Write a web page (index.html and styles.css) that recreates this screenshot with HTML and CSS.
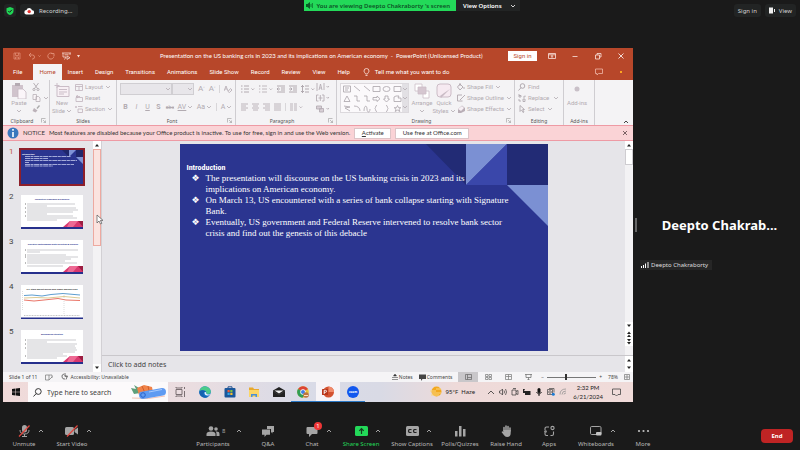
FILE: index.html
```html
<!DOCTYPE html>
<html lang="en">
<head>
<meta charset="utf-8">
<title>Meeting - shared screen</title>
<link rel="stylesheet" href="styles.css">
</head>
<body>
<svg class="defs" aria-hidden="true">
  <symbol id="chev" viewBox="0 0 6 4"><path d="M1 1l2 2 2-2" fill="none" stroke="currentColor" stroke-width=".8"/></symbol>
  <symbol id="up" viewBox="0 0 6 4"><path d="M1 3l2-2 2 2" fill="none" stroke="currentColor"/></symbol>
  <symbol id="tri-up" viewBox="0 0 8 8"><path d="M2 5.500L4 3l2 2.500z" fill="#222"/></symbol>
  <symbol id="tri-down" viewBox="0 0 8 8"><path d="M2 2.500L4 5l2-2.500z" fill="#222"/></symbol>
  <symbol id="launch" viewBox="0 0 5 5"><path d="M.5 4.500v-4h4M2 2l2.500 2.500M4.500 2.500v2h-2" fill="none" stroke="#999" stroke-width=".6"/></symbol>
  <symbol id="deck" viewBox="0 0 62 34">
    <rect width="62" height="34" fill="#fff"/>
    <path d="M42 32l7-6h13v6z" fill="#d9386f"/><path d="M49 26h8l-5 6h-6z" fill="#ee6a94"/><path d="M57 26h5v6z" fill="#9c1e42"/>
    <rect y="32" width="62" height="2" fill="#26308c"/>
  </symbol>
</svg>

<header class="meeting-bar">
  <div class="bar-left">
    <button class="chip shield" aria-label="Security"><svg width="8" height="8" viewBox="0 0 8 8"><path d="M4 0l3.500 1.200V4C7.500 6 6 7.400 4 8 2 7.400.5 6 .5 4V1.200z" fill="#1fd655"/><path d="M2.300 4l1.300 1.300 2.300-2.500" fill="none" stroke="#1a1a1a"/></svg></button>
    <div class="chip"><svg width="10" height="8" viewBox="0 0 10 8"><path d="M2.500 7.500a2.200 2.200 0 010-4.400A2.800 2.800 0 018 3.300a2.100 2.100 0 010 4.200z" fill="#fff"/><circle cx="5.200" cy="4.600" r="1.700" fill="#e8302c"/></svg><span class="rec">Recording...</span></div>
  </div>
  <div class="banner">
    <div class="viewing"><svg width="7" height="7" viewBox="0 0 7 7"><path d="M0 2h1.500L4 0v7L1.500 5H0z" fill="#0a5a26"/><path d="M5 2v3M6.400 1v5" stroke="#0a5a26" stroke-width=".7"/></svg>You are viewing Deepto Chakraborty 's screen</div>
    <button class="view-options">View Options <svg width="6" height="4"><use href="#chev"/></svg></button>
  </div>
  <div class="bar-right">
    <button class="chip">Sign in</button>
    <button class="chip"><svg width="7" height="7" viewBox="0 0 7 7"><rect y=".5" width="4" height="6" fill="#eee"/><path d="M5 2h1v3H5z" fill="#eee"/></svg>View</button>
  </div>
</header>

<main class="stage">
  <section class="desktop">
    <div class="titlebar">
      <div class="quick">
        <svg width="8" height="8" viewBox="0 0 8 8" fill="none" stroke="#df8b72"><path d="M1 1h6v6H1zM2.500 1v2.500h3V1M2.500 7V5h3v2" stroke-width=".8"/></svg>
        <svg width="14" height="8" viewBox="0 0 14 8" fill="none" stroke="#df8b72"><path d="M3 1L1 3l2 2M1 3h3.500a2 2 0 010 4H4M10.500 3.500l1 1 1-1"/></svg>
        <svg width="8" height="8" viewBox="0 0 8 8" fill="none" stroke="#df8b72"><path d="M6 2a3 3 0 10.800 2.500M4 1.500h3V4"/></svg>
        <svg width="9" height="8" viewBox="0 0 9 8" fill="none" stroke="#f6dcd4" stroke-width=".8"><path d="M0 1h9M1 1v4h3M8 1v2M2.500 2.800h4M4 5l-1.500 2.500M5 4l3 1.700-3 1.700z"/></svg>
        <svg width="5" height="5" viewBox="0 0 5 5"><path d="M1 1h3L2.500 3.500z" fill="#f6dcd4"/></svg>
      </div>
      <h1 class="doc-title">Presentation on the US banking cris in 2023 and its implications on American economy &nbsp;- &nbsp;PowerPoint (Unlicensed Product)</h1>
      <div class="win">
        <button class="signin">Sign in</button>
        <button aria-label="Ribbon options"><svg width="8" height="8" viewBox="0 0 8 8" fill="none" stroke="#fbe6df" stroke-width=".8"><path d="M.5 1.500h7v5h-7zM.5 2.800h7M4 6V3.600M2.800 4.600L4 3.600l1.200 1"/></svg></button>
        <button aria-label="Minimize"><svg width="8" height="8" viewBox="0 0 8 8"><path d="M1.500 4.500h5" stroke="#fbe6df" stroke-width=".8"/></svg></button>
        <button aria-label="Restore"><svg width="8" height="8" viewBox="0 0 8 8" fill="none" stroke="#fbe6df" stroke-width=".8"><path d="M1.500 3h4v4h-4zM3 3V1.500h4V5H5.500"/></svg></button>
        <button aria-label="Close"><svg width="8" height="8" viewBox="0 0 8 8"><path d="M1.500 1.500l5 5M6.500 1.500l-5 5" stroke="#fff" stroke-width=".8"/></svg></button>
      </div>
    </div>

    <nav class="tabs">
      <a class="file" href="#">File</a><a class="active" href="#">Home</a><a href="#">Insert</a><a href="#">Design</a><a href="#">Transitions</a><a href="#">Animations</a><a href="#">Slide Show</a><a href="#">Record</a><a href="#">Review</a><a href="#">View</a><a href="#">Help</a>
      <a class="tell" href="#"><svg width="7" height="9" viewBox="0 0 7 9" fill="none" stroke="#fbe6df" stroke-width=".8"><path d="M2.500 6C2.500 5 1 4.500 1 3a2.500 2.500 0 015 0c0 1.500-1.500 2-1.500 3zM2.500 7.500h2"/></svg>Tell me what you want to do</a>
      <span class="tab-end"><svg width="8" height="8" viewBox="0 0 8 8"><path d="M.5 1h7v4.500H3.500L2 7V5.500H.5z" fill="none" stroke="#f0b8a8" stroke-width=".8"/></svg><i class="dot"></i></span>
    </nav>

    <div class="ribbon">
      <section class="group clipboard">
        <div class="tools">
          <button class="big"><svg width="16" height="16" viewBox="0 0 16 16"><path d="M1 2h11v12H1z" fill="#d0c3cc"/><path d="M4 0h5v3H4z" fill="#b5aab2"/><path d="M7 6h5l3 3v7H7z" fill="#fbf5f9" stroke="#c5b8c1" stroke-width=".8"/></svg>Paste<svg width="6" height="4"><use href="#chev"/></svg></button>
          <div class="stack">
            <button aria-label="Cut"><svg width="9" height="8" viewBox="0 0 9 8" fill="none" stroke="#b0a9af" stroke-width=".9"><path d="M1.500 0l4 5.500M6.500 0l-4 5.500"/><circle cx="2" cy="6.500" r="1.100"/><circle cx="6" cy="6.500" r="1.100"/></svg></button>
            <button aria-label="Copy"><svg width="9" height="8" viewBox="0 0 9 8" fill="#f8f3f6" stroke="#b9b1b8" stroke-width=".8"><path d="M1 .5h3.500v5H1zM4 2.500h2.500L8 4v3.500H4z"/></svg><svg width="6" height="4"><use href="#chev"/></svg></button>
            <button aria-label="Format Painter"><svg width="9" height="8" viewBox="0 0 9 8"><path d="M7.500.5L5 3.500" stroke="#aaa" stroke-width="1.300"/><path d="M2 3l3.500 2.500L3.500 7.500.5 6z" fill="#bcb2b9"/></svg></button>
          </div>
        </div>
        <h2 class="launches">Clipboard<svg width="5" height="5"><use href="#launch"/></svg></h2>
      </section>

      <section class="group slides">
        <div class="tools">
          <button class="big"><svg width="16" height="16" viewBox="0 0 16 16" fill="none" stroke="#cabdc7"><path d="M3 3.500h12v10H3z" fill="#f8f0f5"/><path d="M5 6.500h8M5 9h8M5 11h5M3 0v5M.5 2.500h5"/></svg>New<span class="with-chev">Slide<svg width="6" height="4"><use href="#chev"/></svg></span></button>
          <div class="stack">
            <button><svg width="8" height="7" viewBox="0 0 8 7" fill="none" stroke="#c0b3bc" stroke-width=".8"><path d="M.5.500h7v6h-7zM.5 2.500h7M4 2.500v4"/></svg>Layout<svg width="6" height="4"><use href="#chev"/></svg></button>
            <button><svg width="8" height="7" viewBox="0 0 8 7" fill="none" stroke="#c0b3bc" stroke-width=".8"><path d="M1 2.500h6.500v4H1zM3 0L1 1.500 3 3M1 1.500h4"/></svg>Reset</button>
            <button><svg width="8" height="7" viewBox="0 0 8 7" fill="none" stroke="#c0b3bc" stroke-width=".8"><path d="M3 .5h4.500M3 3h4.500v3.500H3zM1 0v2M0 1h2"/></svg>Section<svg width="6" height="4"><use href="#chev"/></svg></button>
          </div>
        </div>
        <h2>Slides</h2>
      </section>

      <section class="group font">
        <div class="rows">
          <div class="row">
            <span class="combo face"><select aria-label="Font" disabled><option></option></select><svg width="6" height="4"><use href="#chev"/></svg></span><span class="combo size"><select aria-label="Font size" disabled><option></option></select><svg width="6" height="4"><use href="#chev"/></svg></span>
            <button class="grow">A<sup>˄</sup></button><button class="grow">A<sup>˅</sup></button>
            <button class="sep" aria-label="Clear formatting"><svg width="8" height="8" viewBox="0 0 8 8" fill="none" stroke="#b3a8b0"><path d="M0 6l2-5 2 5M1 4h2M4 6.500l2.500-3L8 5 5.500 7.500z" stroke-width=".8"/></svg></button>
          </div>
          <div class="row letters">
            <button><b>B</b></button><button><em>I</em></button><button><u>U</u></button><button><b>S</b></button><button><s class="abc">abc</s></button><button><u>AV</u><svg width="6" height="4"><use href="#chev"/></svg></button><button>Aa<svg width="6" height="4"><use href="#chev"/></svg></button><button class="sep">A<svg width="6" height="4"><use href="#chev"/></svg></button>
          </div>
        </div>
        <h2 class="launches">Font<svg width="5" height="5"><use href="#launch"/></svg></h2>
      </section>

      <section class="group para">
        <div class="tools">
        <div class="rows">
          <div class="row">
            <button aria-label="Bullets"><svg width="14" height="8" viewBox="0 0 14 8" stroke="#aaa3a9" fill="none" stroke-width=".9"><path d="M0 1h1.500M0 4h1.500M0 7h1.500M3 1h5M3 4h5M3 7h5M10.500 3.500l1.300 1.300 1.300-1.300"/></svg></button>
            <button aria-label="Numbering"><svg width="14" height="8" viewBox="0 0 14 8" stroke="#b9b2b8" fill="none" stroke-width=".9"><path d="M.8 0v2M0 4h1.300M0 7h1.300M3 1h5M3 4h5M3 7h5M10.500 3.500l1.300 1.300 1.300-1.300"/></svg></button>
            <button aria-label="Decrease indent"><svg width="8" height="8" viewBox="0 0 8 8" stroke="#aaa3a9" fill="none" stroke-width=".9"><path d="M0 1h8M4 3h4M4 5h4M0 7h8M3 4H0M1.500 2.500L0 4l1.500 1.500"/></svg></button>
            <button aria-label="Increase indent"><svg width="8" height="8" viewBox="0 0 8 8" stroke="#aaa3a9" fill="none" stroke-width=".9"><path d="M0 1h8M4 3h4M4 5h4M0 7h8M0 4h3M1.500 2.500L3 4 1.500 5.500"/></svg></button>
            <button aria-label="Line spacing"><svg width="14" height="8" viewBox="0 0 14 8" stroke="#aaa3a9" fill="none" stroke-width=".9"><path d="M1.500 0v8M0 2l1.500-1.500L3 2M0 6l1.500 1.500L3 6M4 1h4M4 4h4M4 7h4M10.500 3.500l1.300 1.300 1.300-1.300"/></svg></button>
          </div>
          <div class="row aligns">
            <button aria-label="Align left"><svg width="7" height="8" viewBox="0 0 7 8" stroke="#b5aeb4" stroke-width=".9"><path d="M0 1h7M0 3h5M0 5h7M0 7h5"/></svg></button>
            <button aria-label="Center"><svg width="7" height="8" viewBox="0 0 7 8" stroke="#b5aeb4" stroke-width=".9"><path d="M0 1h7M1 3h5M0 5h7M1 7h5"/></svg></button>
            <button aria-label="Align right"><svg width="7" height="8" viewBox="0 0 7 8" stroke="#b5aeb4" stroke-width=".9"><path d="M0 1h7M2 3h5M0 5h7M2 7h5"/></svg></button>
            <button aria-label="Justify"><svg width="7" height="8" viewBox="0 0 7 8" stroke="#b5aeb4" stroke-width=".9"><path d="M0 1h7M0 3h7M0 5h7M0 7h7"/></svg></button>
            <button class="sep" aria-label="Columns"><svg width="14" height="8" viewBox="0 0 14 8" stroke="#b5aeb4" fill="none" stroke-width=".9"><path d="M0 1h3M0 3h3M0 5h3M0 7h3M4 1h3M4 3h3M4 5h3M4 7h3M9.500 3.500l1.300 1.300 1.300-1.300"/></svg></button>
          </div>
        </div>
        <div class="stack">
          <button aria-label="Text direction"><svg width="14" height="8" viewBox="0 0 14 8" stroke="#b5aeb4" fill="none" stroke-width=".9"><path d="M1 0v8M3 7l1.500-6L6 7M3.500 5h2M8 0v7M10.500 3l1.300 1.300L13 3"/></svg></button>
          <button aria-label="Align text"><svg width="14" height="8" viewBox="0 0 14 8" stroke="#b5aeb4" fill="none" stroke-width=".9"><path d="M2.500 1H.5v6h2M6 1h2v6H6M4.300 1v6M2.500 4h4M10.500 3l1.300 1.300L13 3"/></svg></button>
          <button aria-label="SmartArt"><svg width="14" height="8" viewBox="0 0 14 8" stroke="#b5aeb4" fill="#d8cfd6" stroke-width=".9"><path d="M.5 1h5v3h-5zM3.500 3.500h4v3.500h-4z"/><path d="M10.500 3l1.300 1.300L13 3" fill="none"/></svg></button>
        </div>
        </div>
        <h2 class="launches">Paragraph<svg width="5" height="5"><use href="#launch"/></svg></h2>
      </section>

      <section class="group drawing">
        <div class="tools">
          <div class="gallery">
            <svg width="61" height="29" viewBox="0 0 61 29" fill="none" stroke="#aaa3aa" stroke-width=".8">
              <path d="M2.500 2h7v6h-7zM4 4h4M4 6h3M13 2l6 5M23 2l6 5M32 2.500h7v5h-7zM53 2.500h7v5h-7z"/><ellipse cx="45.500" cy="5" rx="3.500" ry="2.500"/>
              <path d="M3 17.500L6 12l3 5.500zM13 12h3v5h3M23 12h3v5h3M32 13.500h4V12l3 2.800-3 2.700V16h-4zM44 12h3v3h1.500l-3 3-3-3H44zM53 17.500V13l2-1h3l-1 2h3v3.500z"/>
              <path d="M3 22l6 1-5 1 5 3M13 22c4 0 6 2 6 5M23 27c0-6 3-6 3-2s3 4 3 0M36 21.500c-2 0-1 2-2 3 1 1 0 3 2 3M45 21.500c2 0 1 2 2 3-1 1 0 3-2 3M56.500 21.500l1 2.200h2.300L58 25.200l.8 2.300-2.300-1.400-2.300 1.400.8-2.300-1.800-1.500h2.300z"/>
            </svg>
            <div class="gallery-scroll"><svg width="6" height="4"><use href="#chev"/></svg><svg width="6" height="4"><use href="#chev"/></svg><svg width="6" height="4"><use href="#chev"/></svg></div>
          </div>
          <button class="big"><svg width="16" height="16" viewBox="0 0 16 16" stroke="#cbbcc6" stroke-width=".8"><path d="M1 1h7v7H1z" fill="#fff"/><path d="M9 8h6v7H9z" fill="#fff"/><path d="M4 4h8v7H4z" fill="#d5c6d0"/></svg>Arrange<svg width="6" height="4"><use href="#chev"/></svg></button>
          <button class="big"><svg width="16" height="16" viewBox="0 0 16 16"><rect x="1" y="1" width="14" height="13" rx="3" fill="#f6eaf1" stroke="#cbbcc6"/><path d="M14 6L8 12l-3 3-1-2 4-3z" fill="#c9bbc5"/></svg>Quick<span class="with-chev">Styles<svg width="6" height="4"><use href="#chev"/></svg></span></button>
          <div class="stack">
            <button><svg width="8" height="8" viewBox="0 0 8 8" fill="none" stroke="#b0a7ae" stroke-width=".9"><path d="M3 1l3 3-3 3-2.500-3zM3 0v3M7 4v2"/></svg>Shape Fill<svg width="6" height="4"><use href="#chev"/></svg></button>
            <button><svg width="8" height="8" viewBox="0 0 8 8" fill="none" stroke="#b0a7ae" stroke-width=".9"><path d="M5 1H.5v6h5M8 1L3 6"/></svg>Shape Outline<svg width="6" height="4"><use href="#chev"/></svg></button>
            <button><svg width="8" height="8" viewBox="0 0 8 8"><path d="M1 4l4-3.500L8 3v3L4 8H1z" fill="#b9aeb6"/><path d="M1 4l4-3 2 2-3 3z" fill="#f7f0f5"/></svg>Shape Effects<svg width="6" height="4"><use href="#chev"/></svg></button>
          </div>
        </div>
        <h2 class="launches">Drawing<svg width="5" height="5"><use href="#launch"/></svg></h2>
      </section>

      <section class="group editing">
        <div class="tools"><div class="stack">
          <button><svg width="8" height="8" viewBox="0 0 8 8" fill="none" stroke="#a9a2a8" stroke-width=".9"><circle cx="4.500" cy="3" r="2.300"/><path d="M3 4.700L.5 7.500"/></svg>Find</button>
          <button><svg width="8" height="8" viewBox="0 0 8 8" fill="none" stroke="#a9a2a8" stroke-width=".8"><path d="M1 0v3h2V1.500H1M5 5v2.500h2V5zM1 5v2h2M5 3h2V1.500"/></svg>Replace<svg width="10" height="4"><use href="#chev"/></svg></button>
          <button><svg width="8" height="8" viewBox="0 0 8 8" fill="none" stroke="#a9a2a8" stroke-width=".8"><path d="M2 .5v6l1.600-1.600L5 7.500l1-.5-1.300-2.500H6.500z"/></svg>Select<svg width="6" height="4"><use href="#chev"/></svg></button>
        </div></div>
        <h2>Editing</h2>
      </section>

      <section class="group addins">
        <div class="tools"><button class="big"><svg width="16" height="16" viewBox="0 0 16 16"><circle cx="8" cy="6" r="2.500" fill="#c9c0c8"/></svg>Add-ins</button></div>
        <h2>Add-ins</h2>
      </section>
      <button class="collapse" aria-label="Collapse ribbon"><svg width="6" height="4"><use href="#up"/></svg></button>
    </div>

    <div class="notice">
      <svg width="12" height="12" viewBox="0 0 12 12"><circle cx="6" cy="6" r="5.500" fill="#3a78bd"/><path d="M6 2v1.800M6 5v5" stroke="#fff" stroke-width="1.600"/></svg>
      <span class="notice-tag">NOTICE</span><span class="notice-text">Most features are disabled because your Office product is inactive. To use for free, sign in and use the Web version.</span>
      <button><u>A</u>ctivate</button><button class="wide">Use free at Office.com</button>
      <button class="x" aria-label="Dismiss"><svg width="6" height="6" viewBox="0 0 6 6"><path d="M1 1l4 4M5 1L1 5" stroke="#5c4548" stroke-width=".8"/></svg></button>
    </div>

    <div class="work">
      <ol class="thumbs">
        <li class="current"><span>1</span><svg viewBox="0 0 62 34"><rect width="62" height="34" fill="#2b3590"/><path d="M41 0h7v7zM55 0h7v7h-7z" fill="#1f276c"/><path d="M48 0h7l-7 7zM55 7h7v7z" fill="#7f93d6"/><g class="mini light"><text x="1" y="5">Introduction</text></g><path d="M4 6.500h46M4 8.500h23M4 10.500h52M4 12.500h4M4 14.500h49M4 16h28" stroke="#c3c9ec" stroke-width=".8" stroke-dasharray="5 .5 3 .6"/></svg></li>
        <li><span>2</span><svg viewBox="0 0 62 34"><use href="#deck"/><g class="mini"><text x="31" y="5" text-anchor="middle">Theoretical framework &amp; Research</text></g><path d="M6 9h48M6 11h20M6 13h49M6 15h51M6 17h46M6 19h20M6 21h46M6 23h50M6 25h30" stroke="#b4b4ba" stroke-width=".7"/><path d="M4 9h1M4 13h1M4 17h1M4 21h1" stroke="#777"/></svg></li>
        <li><span>3</span><svg viewBox="0 0 62 34"><use href="#deck"/><g class="mini"><text x="32" y="5" text-anchor="middle">Narrative Methodology/Data collection &amp; research</text></g><path d="M6 10h51M6 12h13M6 15h39M6 17h51M6 19h44M6 21h38M6 23h50M6 26h36" stroke="#b4b4ba" stroke-width=".7"/><path d="M4 10h1M4 15h1M4 17h1M4 23h1" stroke="#777"/></svg></li>
        <li><span>4</span><svg viewBox="0 0 62 34"><rect width="62" height="34" fill="#fff"/><g class="mini black"><text x="31" y="5" text-anchor="middle">U.S. Stock Market During 2023 global banking crisis</text></g><path d="M3 10.500l8-.5 10 1 9-1.500 12-1 17 1.500" fill="none" stroke="#5d9ed0"/><path d="M3 13l12-.5 12 .5 16-1.500 16 1.500" fill="none" stroke="#d2bd79" stroke-width=".8"/><path d="M3 15l10 1 10-1 14-1.500 8 1.500 14 .5" fill="none" stroke="#ea7568"/><path d="M1.500 6v20M43 8v21" stroke="#aaa" stroke-width=".4" stroke-dasharray="1 1"/><path d="M3 30.500h56" stroke="#aaa" stroke-width=".7" stroke-dasharray="1 .6"/><rect y="32.500" width="62" height="1.500" fill="#26308c"/></svg></li>
        <li><span>5</span><svg viewBox="0 0 62 34"><use href="#deck"/><g class="mini"><text x="31" y="5" text-anchor="middle">Background literature</text></g><path d="M6 10h49M6 12h20M6 14h50M6 16h48M6 18h49M6 20h50M6 22h48M6 24h36M6 26h40M6 28h30" stroke="#b4b4ba" stroke-width=".7"/><path d="M4 10h1M4 14h1M4 18h1M4 26h1" stroke="#777"/></svg></li>
      </ol>
      <div class="scroll thumbs-scroll">
        <svg class="arrow" viewBox="0 0 8 8"><use href="#tri-up"/></svg><div class="handle pink"></div><svg class="arrow end" viewBox="0 0 8 8"><use href="#tri-down"/></svg>
        <svg class="cursor" width="8" height="11" viewBox="0 0 8 11"><path d="M1 1v8l2-2 1.500 3 1.300-.6-1.400-3H7z" fill="#fff" stroke="#555" stroke-width=".7"/></svg>
      </div>
      <div class="editor">
        <div class="canvas">
          <article class="slide">
            <svg class="deco" viewBox="0 0 368 207"><path d="M246 0h40v41zM327 0h41v41h-41z" fill="#222b75"/><path d="M286 0h41l-41 41zM327 41h41v41z" fill="#7b90d3"/><path d="M327 0v41h-41z" fill="#3a47aa"/></svg>
            <h3>Introduction</h3>
            <ul>
              <li>The presentation will discourse on the US banking crisis in 2023 and its<br>implications on American economy.</li>
              <li>On March 13, US encountered with a series of bank collapse starting with Signature<br>Bank.</li>
              <li>Eventually, US government and Federal Reserve intervened to resolve bank sector<br>crisis and find out the genesis of this debacle</li>
            </ul>
          </article>
          <div class="scroll paging">
            <svg class="arrow" viewBox="0 0 8 8"><use href="#tri-up"/></svg><div class="handle"></div>
            <svg class="arrow end" viewBox="0 0 8 8"><use href="#tri-down"/></svg><svg class="arrow" viewBox="0 0 8 8"><path d="M2 4l2-2.500L6 4zM2 7l2-2.500L6 7z" fill="#222"/></svg><svg class="arrow" viewBox="0 0 8 8"><path d="M2 1l2 2.500L6 1zM2 4l2 2.500L6 4z" fill="#222"/></svg>
          </div>
        </div>
        <div class="notes"><input type="text" aria-label="Notes" placeholder="Click to add notes"><div class="scroll"><svg class="arrow" viewBox="0 0 8 8"><use href="#tri-up"/></svg><svg class="arrow" viewBox="0 0 8 8"><use href="#tri-down"/></svg></div></div>
      </div>
    </div>

    <footer class="status">
      <span>Slide 1 of 11</span>
      <svg width="8" height="7" viewBox="0 0 8 7" fill="none" stroke="#777" stroke-width=".7"><path d="M4 1H.5v5H4zM4 1h3v3M4 6l3.500-3.500"/></svg>
      <span class="access"><svg width="8" height="7" viewBox="0 0 8 7" fill="none" stroke="#555" stroke-width=".8"><path d="M3 1a2.500 2.500 0 101 5M4 0v3l2 1M3.500 3h3L5 6.500"/></svg>Accessibility: Unavailable</span>
      <div class="status-right">
        <button><svg width="6" height="6" viewBox="0 0 6 6" stroke="#666" stroke-width=".7"><path d="M0 3.500h6M0 5.500h6M3 0L1.500 2h3z"/></svg>Notes</button>
        <button><svg width="7" height="7" viewBox="0 0 7 7"><path d="M0 .5h7v4.500H3.500L2 7V5H0z" fill="#444"/></svg>Comments</button>
        <div class="views">
          <button class="on" aria-label="Normal"><svg width="7" height="6" viewBox="0 0 7 6" fill="none" stroke="#666" stroke-width=".7"><path d="M.5.500h6v5h-6zM2.500.500v5M2.500 3.500h4"/></svg></button>
          <button aria-label="Slide sorter"><svg width="7" height="6" viewBox="0 0 7 6" fill="none" stroke="#777" stroke-width=".7"><path d="M.5.500h2.500v2H.5zM4 .5h2.500v2H4zM.5 3.500h2.500v2H.5zM4 3.500h2.500v2H4z"/></svg></button>
          <button aria-label="Reading view"><svg width="7" height="6" viewBox="0 0 7 6" fill="none" stroke="#777" stroke-width=".7"><path d="M.5.500h6v5h-6zM3.500.500v5M1 2.500h5"/></svg></button>
          <button aria-label="Slide show"><svg width="7" height="6" viewBox="0 0 7 6" fill="none" stroke="#666" stroke-width=".7"><path d="M0 .5h7M1 .5v3h5v-3M3.500 3.500v2M2.500 5.500h2"/></svg></button>
        </div>
        <label class="zoom">−<input type="range" aria-label="Zoom" min="10" max="190" value="78">+</label>
        <span class="pct">78%</span>
        <svg width="6" height="6" viewBox="0 0 6 6" fill="none" stroke="#777" stroke-width=".7"><path d="M.5.500h5v5h-5zM3 1v4M1 3h4"/></svg>
      </div>
    </footer>

    <footer class="taskbar">
      <button class="start" aria-label="Start"><svg width="8" height="8" viewBox="0 0 8 8"><path d="M0 1l3.500-.5v3.300H0zM4 .4L8 0v3.800H4zM0 4.200h3.500v3.300L0 7zM4 4.200h4V8l-4-.5z" fill="#111"/></svg></button>
      <label class="search"><svg width="9" height="9" viewBox="0 0 9 9" fill="none" stroke="#222" stroke-width=".9"><circle cx="5.300" cy="3.500" r="2.900"/><path d="M3.200 5.600L.5 8.500"/></svg><input type="text" aria-label="Search" placeholder="Type here to search">
        <svg width="36" height="16" viewBox="0 0 36 16"><path d="M1 14q16 2 33-2" stroke="#f3c2b4" fill="none"/><path d="M0 4l5 1-2-4 5 3 1 5-6 1z" fill="#5f9f7a"/><path d="M6 4l7-3 8 2 1 5-14 3z" fill="#f18348"/><path d="M11 2l3 7M17 2l1 5" stroke="#cf5f2d"/><path d="M9 8l22-4q4 0 4 4 0 3-3 3.500L12 15q-4 0-4-4 0-2 1-3z" fill="#5f9bf2"/><circle cx="12" cy="11" r="2.300" fill="none" stroke="#2c62c9"/><path d="M18 8l13-2.500" stroke="#a7cbff"/></svg></label>
      <div class="apps">
        <button aria-label="Task view"><svg width="12" height="12" viewBox="0 0 12 12" fill="none" stroke="#6d6265" stroke-width=".9"><path d="M2 3.500h6v5H2zM2 1v1h6V1M2 11v-1h6v1M10.500 1v2M10.500 5v6"/></svg></button>
        <button aria-label="Edge"><svg width="12" height="12" viewBox="0 0 12 12"><circle cx="6" cy="6" r="5.800" fill="#1a78cf"/><path d="M.5 5A5.700 5.700 0 0111.800 6c0 2-3.500 2.500-4.500 1.500C8 5 5 3 .5 5z" fill="#4acb8a"/><path d="M.3 5.500C3 3 7 4.500 7 6.500c-1-.5-2.500 0-2.500 1.500S7 11 9.500 10.500A5.800 5.800 0 01.3 5.500z" fill="#1562b0"/><path d="M5.500 6.500c1-1 2 0 1.800 1.200 1 1 3 .8 4 .2-2 2.500-6 2-5.800-1.400z" fill="#e7f5fb"/></svg></button>
        <button aria-label="Store"><svg width="12" height="12" viewBox="0 0 12 12"><path d="M4 2V.8h4V2" fill="none" stroke="#27558f"/><rect x=".5" y="2" width="11" height="9.500" rx="1" fill="#1b579b"/><path d="M3.500 4h2.200v2.200H3.500z" fill="#f05a38"/><path d="M6.300 4h2.200v2.200H6.300z" fill="#82c13c"/><path d="M3.500 6.800h2.200V9H3.500z" fill="#32a8e8"/><path d="M6.300 6.800h2.200V9H6.300z" fill="#f8bd2c"/></svg></button>
        <button aria-label="File Explorer"><svg width="12" height="12" viewBox="0 0 12 12"><path d="M1 1.500h4l1 1.500h5v8H1z" fill="#e8a92d"/><path d="M1 4h10v7H1z" fill="#fbd668"/><path d="M3 11V8h6v3H7.500V9.500h-3V11z" fill="#4a90d9"/></svg></button>
        <button aria-label="Mail"><svg width="12" height="12" viewBox="0 0 12 12"><path d="M0 4.500L6 1l6 3.500V11H0z" fill="#222"/><path d="M1.500 4.500h9L6 7.500z" fill="#eee"/><path d="M0 5l6 4 6-4" fill="none" stroke="#444" stroke-width=".6"/></svg></button>
        <button class="open" aria-label="Chrome"><svg width="12" height="12" viewBox="0 0 12 12"><circle cx="6" cy="6" r="5.800" fill="#e6c437"/><path d="M6 6L1 3a5.800 5.800 0 0110 0z" fill="#dc4435"/><path d="M6 6l-5-3a5.800 5.800 0 004.500 8.800L8 8z" fill="#2f9d55"/><circle cx="6" cy="6" r="2.700" fill="#fff"/><circle cx="6" cy="6" r="2" fill="#3f7fe6"/><circle cx="9" cy="9" r="2.800" fill="#bd7540"/><path d="M7 9.500h4" stroke="#ffe0bb"/></svg></button>
        <button class="open front" aria-label="PowerPoint"><svg width="12" height="12" viewBox="0 0 12 12"><circle cx="6.500" cy="6" r="5.500" fill="#d35230"/><path d="M6.500.500A5.500 5.500 0 0112 6H6.500z" fill="#f08a6a"/><rect y="3" width="6" height="6" rx=".5" fill="#b83519"/><path d="M2.200 8V4.300h1.300a1 1 0 010 2H2.200" stroke="#fff" fill="none" stroke-width=".9"/></svg></button>
        <button class="open" aria-label="Zoom"><svg width="12" height="12" viewBox="0 0 12 12"><circle cx="6" cy="6" r="6" fill="#1257ee"/><g class="zoom-mark"><text x="6" y="7" text-anchor="middle">zoom</text></g></svg></button>
      </div>
      <div class="tray">
        <span class="weather"><svg width="12" height="12" viewBox="0 0 12 12"><circle cx="6.500" cy="5.500" r="5" fill="#f3a81d"/><path d="M0 5h6M2 7h9M1 9h8M6 3h5" stroke="#f9d783"/></svg>95°F &nbsp;Haze</span>
        <svg width="8" height="6" viewBox="0 0 8 6"><path d="M1 5l3-3 3 3" fill="none" stroke="#333" stroke-width=".8"/></svg>
        <svg width="8" height="8" viewBox="0 0 8 8" fill="none" stroke="#333" stroke-width=".7"><path d="M.5 3h1L3.500 1v6L1.500 5h-1zM5 2.500q1 1.500 0 3M6.500 1q2 3 0 6"/></svg>
        <svg width="8" height="8" viewBox="0 0 8 8" fill="none" stroke="#333" stroke-width=".7"><path d="M1 2h4v5H1zM5 3.500l2-1v4l-2-1M2 .5h3"/></svg>
        <svg width="8" height="8" viewBox="0 0 8 8"><path d="M1 3h6.500v4H2V5H0V1h2z" fill="#222"/></svg>
        <svg width="8" height="8" viewBox="0 0 8 8"><rect x="2.500" width="3" height="5" rx="1.500" fill="#111"/><path d="M1.500 4q2.500 4 5 0M4 6v2" fill="none" stroke="#111"/></svg>
        <svg width="8" height="8" viewBox="0 0 8 8" fill="none" stroke="#444" stroke-width=".7"><path d="M.5 1.500h5v5h-5zM2 .5h5v4"/><circle cx="3" cy="4" r="1.300"/><circle cx="6.300" cy="6.300" r="1.500" fill="#1c7ad4" stroke="none"/></svg>
        <svg width="8" height="8" viewBox="0 0 8 8" fill="none" stroke="#888" stroke-width=".7"><path d="M1 6.500Q1 1 7 1M3 6.500Q3 3 7 3M5 6.500Q5 5 7 5"/></svg>
        <time>2:32 PM<br>6/21/2024</time>
        <svg class="action" width="9" height="9" viewBox="0 0 9 9"><path d="M.5 1h8v5.500H6L4.500 8 3 6.500H.5z" fill="none" stroke="#444" stroke-width=".8"/></svg>
      </div>
    </footer>
  </section>

  <aside class="people">
    <div class="grip"></div>
    <div class="tile"><strong>Deepto Chakrab...</strong><span class="tag"><svg width="8" height="6" viewBox="0 0 8 6"><path d="M0 4h1v2H0zM2 3h1v3H2zM4 1.500h1V6H4zM6.500 0h1v6h-1z" fill="#fff"/></svg>Deepto Chakraborty</span></div>
  </aside>
</main>

<footer class="controls">
  <div class="left-tools">
    <button class="tool"><span class="ico"><i></i><svg width="16" height="12" viewBox="0 0 16 12"><rect x="6" y="0" width="5" height="7.500" rx="2.500" fill="#a5a5a5"/><path d="M4 5q0 4 4.500 4T13 5M8.500 9v2M6 11.500h5" fill="none" stroke="#a5a5a5"/><path d="M13.500.500L3 11.500" stroke="#e0473f" stroke-width="1.200"/></svg><i><svg width="6" height="4"><use href="#up"/></svg></i></span>Unmute</button>
    <button class="tool"><span class="ico"><i></i><svg width="16" height="12" viewBox="0 0 16 12"><rect x="1" y="2" width="9" height="8" rx="1.500" fill="#a5a5a5"/><path d="M10.500 5L14 2.500v7L10.500 7z" fill="#a5a5a5"/><path d="M13.500.500L3 11.500" stroke="#e0473f" stroke-width="1.200"/></svg><i><svg width="6" height="4"><use href="#up"/></svg></i></span>Start Video</button>
  </div>
  <div class="center-tools">
    <button class="tool"><span class="ico"><i></i><svg width="16" height="12" viewBox="0 0 16 12" fill="#a5a5a5"><circle cx="6" cy="3.500" r="2.300"/><path d="M1.500 11V9q0-2.500 4.500-2.500T10.500 9v2z"/><circle cx="11" cy="4" r="1.800"/><path d="M11.500 11V9q0-1.500-1-2.400 4-.3 4 2.400v2z"/></svg><i class="far"><b>8</b><svg width="6" height="4"><use href="#up"/></svg></i></span>Participants</button>
    <button class="tool"><span class="ico"><svg width="16" height="12" viewBox="0 0 16 12" fill="#a5a5a5"><path d="M7 1h7v6h-1.500v1.500L11 7V4H7z"/><path d="M2 4.500h8v5.200H6.500L4.500 12V9.700H2z"/></svg></span>Q&amp;A</button>
    <button class="tool"><span class="ico"><i></i><svg width="16" height="12" viewBox="0 0 16 12"><path d="M3.500 2h9q1 0 1 1v5q0 1-1 1H8l-3 3V9H3.500q-1 0-1-1V3q0-1 1-1z" fill="#a5a5a5"/></svg><i><svg width="6" height="4"><use href="#up"/></svg></i><span class="badge">1</span></span>Chat</button>
    <button class="tool green"><span class="ico"><i></i><svg width="16" height="12" viewBox="0 0 16 12"><rect x="2" y="1" width="13" height="10" rx="1.500" fill="#23d959"/><path d="M8.500 9V4M6.300 5.800l2.200-2.300 2.200 2.300" fill="none" stroke="#153d20" stroke-width="1.200"/></svg><i><svg width="6" height="4"><use href="#up"/></svg></i></span>Share Screen</button>
    <button class="tool"><span class="ico"><i></i><svg width="16" height="12" viewBox="0 0 16 12"><rect x="2" y="1" width="13" height="10" rx="1.500" fill="#a5a5a5"/><path d="M7.500 4.700q-3-.7-3 1.300t3 1.300M12.500 4.700q-3-.7-3 1.300t3 1.300" fill="none" stroke="#222" stroke-width="1.200"/></svg><i><svg width="6" height="4"><use href="#up"/></svg></i></span>Show Captions</button>
    <button class="tool"><span class="ico"><svg width="16" height="12" viewBox="0 0 16 12" fill="#a5a5a5"><path d="M3 6h2.500v5.500H3zM7 1h2.500v10.500H7zM11 4h2.500v7.500H11z"/></svg></span>Polls/Quizzes</button>
    <button class="tool"><span class="ico"><svg width="16" height="12" viewBox="0 0 16 12"><path d="M6 6V2.500M8 6V1M10 6V1.500M12 6V3" stroke="#a5a5a5" stroke-width="1.500" stroke-linecap="round"/><path d="M5.300 5h7.400v3q0 4-3.700 4-2 0-3.200-2L3.500 7l1-.8 1 .8z" fill="#a5a5a5"/></svg></span>Raise Hand</button>
    <button class="tool"><span class="ico"><svg width="16" height="12" viewBox="0 0 16 12" fill="none" stroke="#a5a5a5" stroke-width="1.100"><path d="M4 5V3.500Q4 2 5.500 2H8M4 7.500V9q0 1.500 1.500 1.500H7M12.500 6.500V9q0 1.500-1.500 1.500H9.500"/><circle cx="11.500" cy="3" r="1.600"/><circle cx="4.500" cy="6.500" r=".8"/></svg></span>Apps</button>
    <button class="tool"><span class="ico"><i></i><svg width="16" height="12" viewBox="0 0 16 12"><rect x="2.500" y="1.500" width="10.500" height="8" rx="1.200" fill="none" stroke="#a5a5a5"/><rect x="8" y="7" width="5.500" height="3.500" rx="1" fill="#c4c4c4"/></svg><i><svg width="6" height="4"><use href="#up"/></svg></i></span>Whiteboards</button>
    <button class="tool"><span class="ico"><svg width="16" height="12" viewBox="0 0 16 12" fill="#c0c0c0"><circle cx="4" cy="6" r="1.100"/><circle cx="8.500" cy="6" r="1.100"/><circle cx="13" cy="6" r="1.100"/></svg></span>More</button>
  </div>
  <div class="leave"><button>End</button></div>
</footer>
</body>
</html>
```
FILE: styles.css
```css
* { box-sizing: border-box; }
body {
  margin: 0;
  min-height: 100vh;
  display: grid;
  grid-template-rows: 48px 1fr 48px;
  background: #1a1a1a;
  color: #ddd;
  font: 6px/8px "Noto Sans", "Open Sans", sans-serif;
}
.defs { position: absolute; width: 0; height: 0; }
svg { flex: none; display: block; }
button, input, select { font: inherit; color: inherit; border: 0; padding: 0; margin: 0; background: none; }
button { display: flex; align-items: center; justify-content: center; white-space: nowrap; }
h1, h2, h3, ul, ol { margin: 0; padding: 0; font-weight: normal; }
a { color: inherit; text-decoration: none; }

/* Meeting header */
.meeting-bar { display: grid; grid-template-columns: 1fr auto 1fr; align-items: start; }
.bar-left, .bar-right { display: flex; gap: 4px; padding: 4px; }
.bar-right { justify-content: flex-end; }
.chip { display: flex; align-items: center; gap: 3px; height: 13px; padding: 0 4px; border-radius: 3px; background: #222424; color: #d5d5d5; }
.chip.shield { padding: 0 2px; }
.rec { padding: 0 2px; }
.banner { display: flex; height: 11px; padding-left: 24px; }
.viewing { display: flex; align-items: center; gap: 3px; padding: 0 6px 0 2px; background: #23d959; color: #0d5426; font-weight: 600; }
.view-options { gap: 8px; padding: 0 4px 0 7px; background: #222424; color: #fff; font-weight: 600; }

/* Shared screen and participant column */
.stage { display: grid; grid-template-columns: minmax(0, 1fr) 167px; padding-left: 3px; }
.desktop { display: grid; grid-template-rows: 16px 16px 45px 16px 1fr 10px 20px; background: #e6e5e9; color: #444; overflow: hidden; font-family: Roboto, "Noto Sans", sans-serif; }

.titlebar { display: grid; grid-template-columns: 157px 1fr auto; align-items: center; background: #b7472a; color: #fff; }
.quick { display: flex; align-items: center; gap: 7px; padding-left: 10px; }
.quick svg:nth-child(2), .quick svg:nth-child(4) { margin-right: -2px; }
.doc-title { font: 6px/8px Lato, sans-serif; white-space: nowrap; }
.win { display: flex; align-items: center; gap: 15px; padding-right: 8px; }
.signin { width: 29px; height: 10px; margin-right: -4px; background: #fff; color: #b7472a; }

.tabs { display: flex; align-items: stretch; background: #b7472a; color: #fff; }
.tabs a { display: flex; align-items: center; padding: 0 6px; white-space: nowrap; }
.tabs .file { padding: 0 11px 0 10px; }
.tabs .active { background: #f4f3f5; color: #b7472a; }
.tabs .tell { gap: 5px; padding-left: 7px; }
.tab-end { display: flex; align-items: center; gap: 17px; margin-left: auto; padding-right: 11px; }
.dot { width: 2px; height: 2px; background: #ffa51f; }

/* Ribbon */
.ribbon { display: flex; background: #f4f3f5; color: #b2abb1; }
.group { display: flex; flex-direction: column; justify-content: space-between; padding: 3px 3px 0; border-right: 1px solid #cfcdd1; }
.group h2 { position: relative; font: 5px/8px "Noto Sans", sans-serif; text-align: center; color: #555; }
.group .launches { padding-right: 8px; }
.group h2 svg { position: absolute; right: 0; top: 1px; }
.tools { display: flex; gap: 4px; }
.clipboard { width: 47px; }
.clipboard .tools { padding-left: 4px; }
.slides { width: 67px; }
.font { width: 119px; }
.para { width: 101px; }
.drawing { width: 178px; }
.editing { width: 49px; }
.addins { width: 31px; }
.big { flex-direction: column; justify-content: flex-start; min-width: 18px; line-height: 8px; text-align: center; }
.big svg + svg { margin-top: 2px; }
.with-chev { display: flex; align-items: center; gap: 1px; }
.stack { display: flex; flex-direction: column; gap: 3px; }
.stack button { height: 8px; gap: 2px; justify-content: flex-start; }
.rows { display: flex; flex-direction: column; gap: 6px; }
.row { display: flex; align-items: center; gap: 3px; height: 12px; }
.combo { display: flex; align-items: center; height: 12px; border: 1px solid #d0ced2; background: #e8e6ea; }
.combo select { flex: 1; min-width: 0; appearance: none; }
.face { width: 53px; }
.size { width: 23px; margin-left: -3px; }
.grow { width: 8px; font-size: 8px; }
.grow sup { font-size: 5px; line-height: 1px; }
.sep { border-left: 1px solid #d8d6d9; padding-left: 4px; }
.letters { gap: 4px; font-size: 7px; padding-left: 2px; }
.letters button { min-width: 7px; gap: 1px; }
.letters .abc { font-size: 5px; }
.para .row { gap: 4px; padding-left: 2px; }
.para .tools { gap: 1px; }
.aligns button { min-width: 7px; }
.gallery { display: flex; height: 30px; border: 1px solid #dcd9dd; background: #fbf9fb; }
.gallery-scroll { display: flex; flex-direction: column; justify-content: space-around; background: #e2e0e4; }
.collapse { margin: auto 4px 1px auto; color: #444; }

/* Licence notice */
.notice { display: flex; align-items: center; gap: 4px; padding: 0 5px 0 4px; background: #fad3d6; border: solid #ee9aa4; border-width: 1px 0; white-space: nowrap; color: #333; font-family: Lato, sans-serif; }
.notice button { height: 11px; min-width: 37px; background: #fff; border: 1px solid #dcc4c7; }
.notice .wide { min-width: 74px; }
.notice .x { margin-left: auto; min-width: 6px; border: 0; background: none; }

/* Workspace */
.work { display: grid; grid-template-columns: 90px 8px 1fr; }
.thumbs { list-style: none; padding: 6px 8px 0 6px; overflow: hidden; }
.thumbs li { display: grid; grid-template-columns: 12px 62px; align-items: start; height: 45px; font-size: 8px; line-height: 10px; }
.thumbs svg { width: 62px; height: 34px; margin-top: 3px; }
.thumbs .current { color: #c4573b; }
.thumbs .current svg { outline: 2px solid #8e1f2a; }
.mini { font: 700 2px "Noto Sans", sans-serif; fill: #26308c; }
.mini.light { fill: #fff; }
.mini.black { fill: #222; }
.scroll { display: flex; flex-direction: column; background: #f3f2f4; }
.paging { padding-bottom: 9px; }
.arrow { width: 8px; height: 8px; background: #fff; }
.arrow.end { margin-top: auto; }
.handle { height: 16px; background: #fff; border: 1px solid #cfcdd1; }
.handle.pink { height: 97px; background: #fbe3df; border-color: #eda9a0; }
.thumbs-scroll { position: relative; }
.cursor { position: absolute; left: 3px; top: 73px; }
.editor { display: grid; grid-template-rows: 1fr 17px; border-left: 1px solid #d2d0d4; }
.canvas { display: grid; grid-template-columns: 1fr 8px; }
.slide { position: relative; justify-self: center; margin: 3px 0 4px; aspect-ratio: 16 / 9; background: #2b3590; color: #fff; padding: 18px 7px; }
.deco { position: absolute; inset: 0; width: 100%; height: 100%; }
.slide h3 { position: relative; font: 700 8px/11px Impact, "Roboto Condensed", "Open Sans Condensed", "Liberation Sans", sans-serif; }
.slide ul { position: relative; list-style: none; font: 9px/11px "Liberation Serif", serif; white-space: nowrap; }
.slide li { padding-left: 19px; }
.slide li::before { content: "❖"; float: left; margin-left: -14px; font-family: "DejaVu Sans", sans-serif; }
.notes { display: flex; border-top: 1px solid #c9c7cb; }
.notes input { flex: 1; padding-left: 6px; font: 7px "Noto Sans", sans-serif; }
.notes input::placeholder, .search input::placeholder { color: #444; opacity: 1; }

/* Status bar */
.status { display: flex; align-items: center; gap: 8px; padding: 0 3px 0 6px; background: #f5f4f6; font: 5px/8px "Noto Sans", sans-serif; white-space: nowrap; }
.access { display: flex; gap: 1px; }
.status-right { display: flex; align-items: center; gap: 6px; margin-left: auto; height: 10px; }
.status-right button { gap: 1px; }
.views { display: flex; margin-right: -3px; }
.views button { width: 20px; height: 10px; }
.views .on { background: #c9c7ca; }
.zoom { display: flex; align-items: center; gap: 3px; }
.zoom input { width: 49px; height: 7px; appearance: none; background: linear-gradient(#777, #777) center / 100% 1px no-repeat; }
.zoom input::-webkit-slider-thumb { appearance: none; width: 2px; height: 6px; background: #333; }

/* Taskbar */
.taskbar { display: flex; background: linear-gradient(90deg, #f0dad9 0, #eadde0 30%, #d9dbe7 47%, #d9dae5 60%, #eedad9 72%, #f0dbd9 100%); color: #222; }
.start { width: 25px; }
.search { display: flex; align-items: center; gap: 5px; width: 140px; padding: 0 1px 0 5px; background: #fcfafb; font: 7px "Noto Sans", sans-serif; }
.search input { flex: 1; min-width: 0; }
.apps { display: flex; width: 197px; }
.apps button { flex: 1; }
.apps .open { border-bottom: 1px solid #2b78c5; padding-top: 1px; }
.apps .front { background: #f7f4f7; }
.zoom-mark { font: 700 3px "Noto Sans", sans-serif; fill: #fff; }
.tray { display: flex; align-items: center; gap: 4px; margin-left: auto; padding-right: 12px; }
.weather { display: flex; align-items: center; gap: 4px; margin-right: 8px; font-family: "Noto Sans", sans-serif; white-space: nowrap; }
.tray time { margin: 0 5px 0 2px; font-family: Lato, sans-serif; line-height: 9px; text-align: center; }

/* Participant column */
.people { display: flex; align-items: center; gap: 2px; padding-left: 2px; }
.grip { width: 2px; height: 14px; background: #666; }
.tile { position: relative; flex: 1; aspect-ratio: 16 / 9; display: flex; align-items: center; justify-content: center; }
.tile strong { font-size: 13px; line-height: 18px; color: #fff; white-space: nowrap; }
.tag { position: absolute; left: 1px; bottom: 0; display: flex; align-items: center; gap: 2px; height: 10px; padding: 0 4px 0 1px; background: #262626; }

/* Meeting controls */
.controls { display: flex; justify-content: space-between; align-items: flex-end; padding-bottom: 2px; color: #b9b9b9; }
.left-tools { display: grid; grid-template-columns: 48px 48px; }
.center-tools { display: grid; grid-template-columns: 64px 46px 42px 56px 46px 50px 42px 44px 50px 44px; }
.tool { flex-direction: column; gap: 3px; }
.tool.green { color: #23d959; }
.ico { position: relative; display: grid; grid-template-columns: 1fr auto 1fr; align-items: center; width: 100%; }
.ico > svg { grid-column: 2; }
.ico i { display: flex; align-items: center; padding-left: 6px; color: #a5a5a5; font-style: normal; }
.ico .far { padding-left: 1px; gap: 11px; }
.ico b { font-weight: normal; }
.badge { position: absolute; left: calc(50% + 2px); top: -3px; width: 8px; height: 8px; border-radius: 4px; background: #ee3636; color: #fff; line-height: 8px; }
.leave { display: flex; justify-content: flex-end; width: 50px; padding: 0 7px 5px 0; }
.leave button { width: 32px; height: 14px; border-radius: 4px; background: #bf2424; color: #fff; font-weight: 700; }
```
